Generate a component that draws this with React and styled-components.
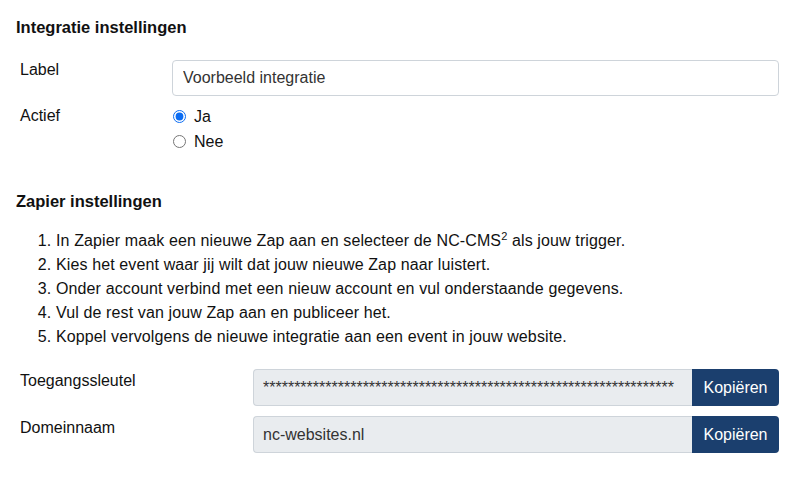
import React from 'react'
import styled, { createGlobalStyle } from 'styled-components'

const GlobalStyle = createGlobalStyle`
  body {
    margin: 0;
    background: #fff;
    font-family: "Liberation Sans", Arial, sans-serif;
    color: #212529;
  }
`

const Page = styled.div`
  padding: 16px 21px 0 16px;
`

const Heading = styled.h5`
  margin: 0;
  font-size: 16.5px;
  font-weight: 700;
  line-height: 22px;
  color: #111;
`

const Row = styled.div`
  display: flex;
  align-items: flex-start;
  padding-left: 4px;
  margin-top: ${p => p.$gap}px;
`

const Label = styled.label`
  flex: 0 0 ${p => p.$width}px;
  font-size: 16px;
  line-height: ${p => p.$lh || 24}px;
  color: #111;
`

const TextInput = styled.input`
  flex: 1;
  box-sizing: border-box;
  height: 36px;
  padding: 0 10px;
  font: inherit;
  font-size: 16px;
  color: #333;
  background: #fff;
  border: 1px solid #ced4da;
  border-radius: 4px;
  outline: none;
`

const RadioGroup = styled.div`
  display: flex;
  flex-direction: column;
  padding-left: 1px;
`

const RadioOption = styled.label`
  display: flex;
  align-items: center;
  height: 25px;
  font-size: 16px;
  color: #111;

  input {
    width: 13px;
    height: 13px;
    margin: 0 8px 0 0;
    accent-color: #0b6cf2;
  }
`

const Steps = styled.ol`
  margin: 17px 0 0;
  padding-left: 40px;
  font-size: 16px;
  line-height: 24px;
  letter-spacing: 0.12px;
  color: #111;

  sup {
    font-size: 11px;
    line-height: 0;
  }
`

const Group = styled.div`
  flex: 1;
  display: flex;
  height: 37px;
`

const ReadOnly = styled.input`
  flex: 1;
  min-width: 0;
  box-sizing: border-box;
  padding: 0 9px;
  font: inherit;
  font-size: 16px;
  color: #333;
  background: #e9ecef;
  border: 1px solid #ced4da;
  border-right: none;
  border-radius: 4px 0 0 4px;
  outline: none;
`

const CopyButton = styled.button`
  flex: 0 0 87px;
  font: inherit;
  font-size: 16px;
  color: #fff;
  background: #1b3f6e;
  border: none;
  border-radius: 0 4px 4px 0;
  cursor: pointer;
`

const steps = [
  <>In Zapier maak een nieuwe Zap aan en selecteer de NC-CMS<sup>2</sup> als jouw trigger.</>,
  'Kies het event waar jij wilt dat jouw nieuwe Zap naar luistert.',
  'Onder account verbind met een nieuw account en vul onderstaande gegevens.',
  'Vul de rest van jouw Zap aan en publiceer het.',
  'Koppel vervolgens de nieuwe integratie aan een event in jouw website.',
]

const App = () => {
  return (
    <Page>
      <GlobalStyle />
      <Heading>Integratie instellingen</Heading>

      <Row $gap={22}>
        <Label $width={152} $lh={20}>Label</Label>
        <TextInput defaultValue="Voorbeeld integratie" />
      </Row>

      <Row $gap={8}>
        <Label $width={152}>Actief</Label>
        <RadioGroup>
          <RadioOption><input type="radio" name="actief" defaultChecked />Ja</RadioOption>
          <RadioOption><input type="radio" name="actief" />Nee</RadioOption>
        </RadioGroup>
      </Row>

      <Heading style={{ marginTop: 36 }}>Zapier instellingen</Heading>
      <Steps>
        {steps.map((s, i) => <li key={i}>{s}</li>)}
      </Steps>

      <Row $gap={20}>
        <Label $width={233}>Toegangssleutel</Label>
        <Group>
          <ReadOnly readOnly value={'*'.repeat(66)} />
          <CopyButton>Kopiëren</CopyButton>
        </Group>
      </Row>

      <Row $gap={10}>
        <Label $width={233}>Domeinnaam</Label>
        <Group>
          <ReadOnly readOnly value="nc-websites.nl" />
          <CopyButton>Kopiëren</CopyButton>
        </Group>
      </Row>
    </Page>
  )
}

export default App
